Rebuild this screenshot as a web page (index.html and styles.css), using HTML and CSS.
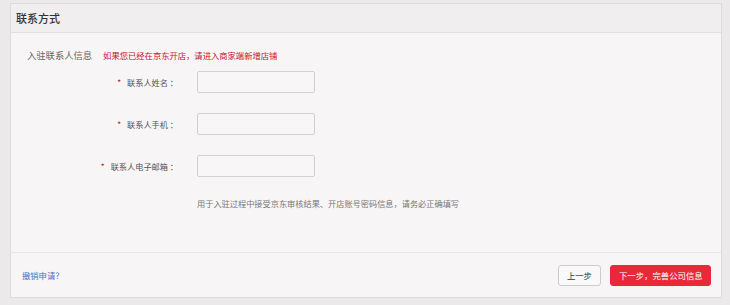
FILE: index.html
```html
<!DOCTYPE html>
<html lang="zh-CN">
<head>
    <meta charset="UTF-8">
    <title>联系方式</title>
    <link rel="stylesheet" href="styles.css">
</head>
<body>
    <div class="panel">
        <div class="panel-head">联系方式</div>

        <div class="panel-body">
            <div class="intro">
                <span class="intro-title">入驻联系人信息</span>
                <span class="intro-tip">如果您已经在京东开店，请进入商家端新增店铺</span>
            </div>

            <div class="form">
                <div class="form-row">
                    <label class="form-label"><i>*</i>联系人姓名 ：</label>
                    <input class="form-input" type="text">
                </div>
                <div class="form-row">
                    <label class="form-label"><i>*</i>联系人手机 ：</label>
                    <input class="form-input" type="text">
                </div>
                <div class="form-row">
                    <label class="form-label"><i>*</i>联系人电子邮箱 ：</label>
                    <input class="form-input" type="text">
                </div>
                <p class="form-hint">用于入驻过程中接受京东审核结果、开店账号密码信息，请务必正确填写</p>
            </div>
        </div>

        <div class="panel-foot">
            <a class="cancel" href="#">撤销申请？</a>
            <div class="actions">
                <button class="btn">上一步</button>
                <button class="btn btn-primary">下一步，完善公司信息</button>
            </div>
        </div>
    </div>
</body>
</html>
```

FILE: styles.css
```css
* {
    box-sizing: border-box;
    margin: 0;
    padding: 0;
}

body {
    font-family: "Noto Sans CJK SC", "Noto Sans", sans-serif;
    background: #ebe9ea;
    padding: 3px 8px 7px 10px;
    width: 730px;
    height: 305px;
}

.panel {
    background: #f8f5f6;
    border: 1px solid #dedbdc;
    height: 295px;
    display: flex;
    flex-direction: column;
}

.panel-head {
    height: 29px;
    line-height: 28px;
    padding-left: 5px;
    background: #f0eeef;
    border-bottom: 1px solid #e2dfe0;
    font-size: 11px;
    font-weight: 500;
    color: #333;
}

.panel-body {
    flex: 1;
    border-bottom: 1px solid #e8e5e6;
}

.intro {
    display: flex;
    align-items: center;
    gap: 11px;
    padding: 12px 0 0 16px;
    height: 31px;
}

.intro-title {
    font-size: 9.3px;
    color: #666;
}

.intro-tip {
    font-size: 8.3px;
    color: #c8102e;
}

.form {
    padding-top: 7px;
}

.form-row {
    display: flex;
    align-items: center;
    gap: 19px;
    margin-bottom: 20px;
}

.form-label {
    width: 167px;
    text-align: right;
    font-size: 8.2px;
    color: #555;
    white-space: nowrap;
}

.form-label i {
    font-style: normal;
    color: #c8102e;
    margin-right: 6px;
}

.form-input {
    width: 118px;
    height: 22px;
    border: 1px solid #d3d0d1;
    border-radius: 2px;
    background: #f8f6f6;
}

.form-hint {
    margin: 12px 0 0 186px;
    font-size: 8.2px;
    color: #777;
}

.panel-foot {
    height: 44px;
    display: flex;
    align-items: center;
    justify-content: space-between;
    padding: 0 10px 0 11px;
}

.cancel {
    font-size: 8.3px;
    color: #4b6fc4;
    text-decoration: none;
}

.actions {
    display: flex;
    gap: 9px;
}

.btn {
    height: 21px;
    padding: 0 8px;
    border: 1px solid #ccc;
    border-radius: 3px;
    background: #f9f9f9;
    color: #333;
    font-family: inherit;
    font-size: 8.4px;
    white-space: nowrap;
}

.btn-primary {
    width: 101px;
    border-color: #e9283a;
    background: #e9283a;
    color: #fff;
}
```
